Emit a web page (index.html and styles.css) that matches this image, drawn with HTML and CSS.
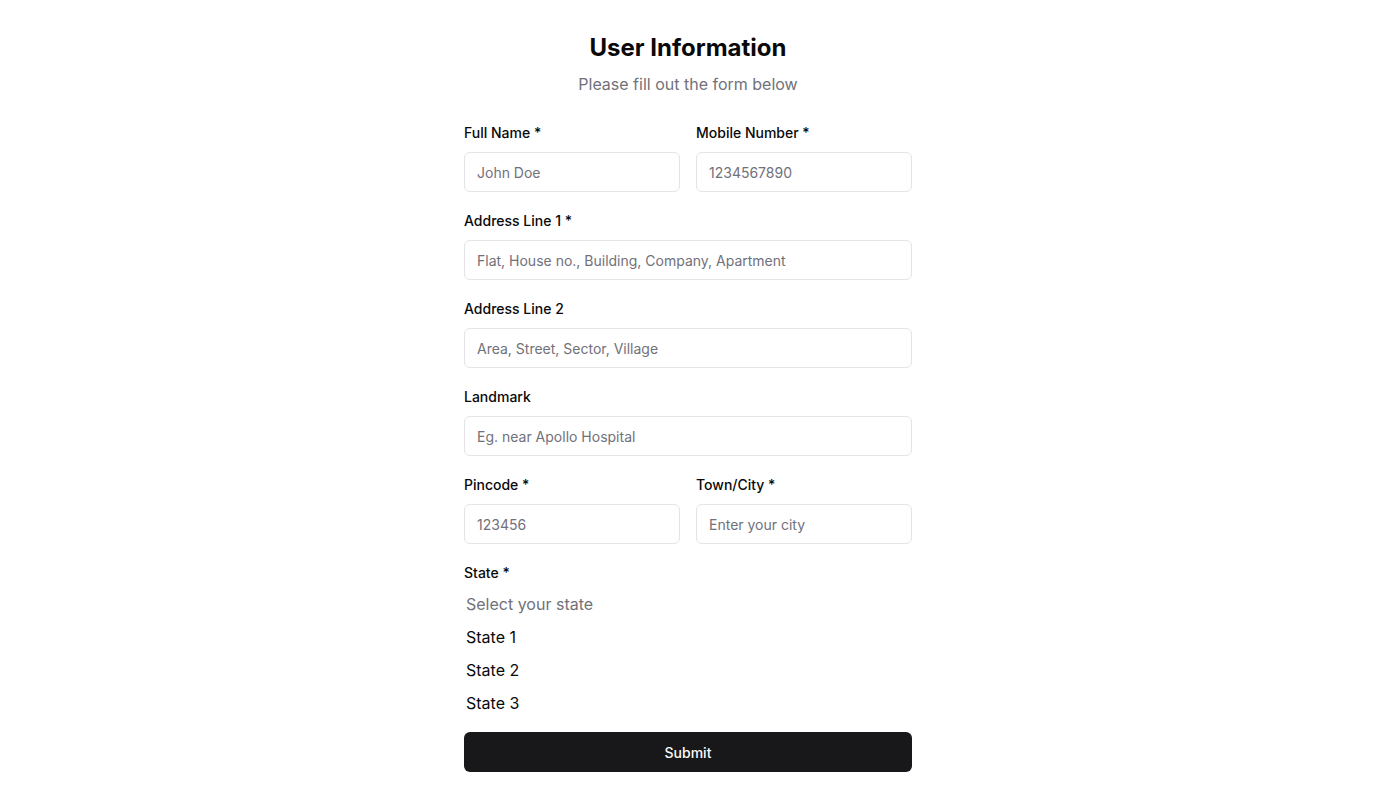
FILE: index.html
```html
<!DOCTYPE html>
<html lang="en">
<head>
<meta charset="utf-8">
<title>User Information</title>
<link rel="stylesheet" href="styles.css">
</head>
<body>
<main class="page">
  <form class="form">
    <header class="head">
      <h1 class="title">User Information</h1>
      <p class="subtitle">Please fill out the form below</p>
    </header>
    <div class="row">
      <div class="field">
        <label class="label">Full Name *</label>
        <input class="input" placeholder="John Doe">
      </div>
      <div class="field">
        <label class="label">Mobile Number *</label>
        <input class="input" placeholder="1234567890">
      </div>
    </div>
    <div class="field">
      <label class="label">Address Line 1 *</label>
      <input class="input" placeholder="Flat, House no., Building, Company, Apartment">
    </div>
    <div class="field">
      <label class="label">Address Line 2</label>
      <input class="input" placeholder="Area, Street, Sector, Village">
    </div>
    <div class="field">
      <label class="label">Landmark</label>
      <input class="input" placeholder="Eg. near Apollo Hospital">
    </div>
    <div class="row">
      <div class="field">
        <label class="label">Pincode *</label>
        <input class="input" placeholder="123456">
      </div>
      <div class="field">
        <label class="label">Town/City *</label>
        <input class="input" placeholder="Enter your city">
      </div>
    </div>
    <div class="field">
      <label class="label">State *</label>
      <div class="options">
        <div class="option placeholder">Select your state</div>
        <div class="option">State 1</div>
        <div class="option">State 2</div>
        <div class="option">State 3</div>
      </div>
    </div>
    <button type="button" class="submit">Submit</button>
  </form>
</main>
</body>
</html>
```
FILE: styles.css
```css
* { box-sizing: border-box; }
html, body { margin: 0; padding: 0; background: #ffffff; }
body {
  font-family: Inter, "Noto Sans", sans-serif;
  color: #09090b;
}
.page {
  display: flex;
  justify-content: center;
  padding-top: 32px;
}
.form {
  width: 448px;
  display: flex;
  flex-direction: column;
  gap: 19px;
}
.head {
  text-align: center;
  margin-bottom: 8px;
}
.title {
  margin: 0;
  font-size: 24px;
  line-height: 32px;
  font-weight: 700;
  color: #09090b;
}
.subtitle {
  margin: 8px 0 0;
  font-size: 16px;
  line-height: 24px;
  color: #71717a;
}
.row {
  display: grid;
  grid-template-columns: minmax(0, 1fr) minmax(0, 1fr);
  gap: 16px;
}
.field {
  display: flex;
  flex-direction: column;
  min-width: 0;
}
.label {
  font-size: 14px;
  line-height: 20px;
  font-weight: 500;
  margin-bottom: 9px;
}
.input {
  width: 100%;
  min-width: 0;
  height: 40px;
  border: 1px solid #e4e4e7;
  border-radius: 6px;
  padding: 0 12px;
  font-family: inherit;
  font-size: 14px;
  color: #09090b;
  background: #fff;
  outline: none;
}
.input::placeholder { color: #71717a; }
.options {
  margin-top: -4px;
  padding-left: 2px;
}
.option {
  font-size: 16px;
  line-height: 33px;
  color: #09090b;
}
.option.placeholder { color: #71717a; }
.submit {
  margin-top: -7px;
  height: 40px;
  border: none;
  border-radius: 6px;
  background: #18181b;
  color: #fafafa;
  font-family: inherit;
  font-size: 14px;
  font-weight: 500;
}
```
